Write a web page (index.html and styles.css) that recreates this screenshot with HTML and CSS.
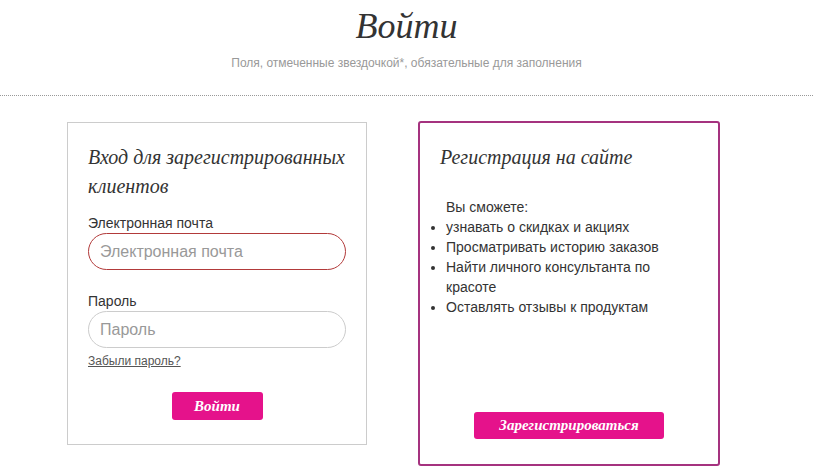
FILE: index.html
```html
<!DOCTYPE html>
<html lang="ru">
<head>
    <meta charset="UTF-8">
    <meta name="viewport" content="width=device-width, initial-scale=1.0">
    <title>Войти</title>
    <link rel="stylesheet" href="styles.css">
</head>
<body>
    <div class="page-head">
        <h1 class="page-title">Войти</h1>
        <p class="page-note">Поля, отмеченные звездочкой*, обязательные для заполнения</p>
    </div>
    <div class="cards">
        <form class="card login">
            <h2 class="card-title">Вход для зарегистрированных клиентов</h2>
            <label class="field-label" for="email">Электронная почта</label>
            <input class="field error" id="email" type="email" placeholder="Электронная почта">
            <label class="field-label second" for="pass">Пароль</label>
            <input class="field" id="pass" type="password" placeholder="Пароль">
            <a class="forgot" href="#">Забыли пароль?</a>
            <div class="btn-row">
                <button class="btn login-btn" type="button">Войти</button>
            </div>
        </form>
        <div class="card register">
            <h2 class="card-title">Регистрация на сайте</h2>
            <div class="benefits">
                <div class="benefits-intro">Вы сможете:</div>
                <ul class="benefits-list">
                    <li>узнавать о скидках и акциях</li>
                    <li>Просматривать историю заказов</li>
                    <li>Найти личного консультанта по красоте</li>
                    <li>Оставлять отзывы к продуктам</li>
                </ul>
            </div>
            <div class="btn-row">
                <button class="btn register-btn" type="button">Зарегистрироваться</button>
            </div>
        </div>
    </div>
</body>
</html>
```

FILE: styles.css
```css
body {
    margin: 0;
    background-color: #fff;
    color: #333;
    font-family: "Liberation Sans", Arial, sans-serif;
    font-size: 14px;
}
.page-head {
    text-align: center;
    padding-top: 4px;
    padding-bottom: 24px;
    border-bottom: 1px dotted #999;
}
.page-title {
    margin: 0;
    font-family: "Liberation Serif", "Times New Roman", serif;
    font-style: italic;
    font-weight: normal;
    font-size: 36px;
    line-height: 44px;
    color: #333;
}
.page-note {
    margin: 7px 0 0;
    font-size: 12px;
    line-height: 16px;
    color: #999;
}
.cards {
    display: flex;
    align-items: flex-start;
    gap: 51px;
    padding-left: 67px;
    margin-top: 25px;
}
.card {
    box-sizing: border-box;
    background: #fff;
}
.login {
    width: 300px;
    margin-top: 1px;
    border: 1px solid #ccc;
    padding: 20px 20px 24px;
    display: flex;
    flex-direction: column;
}
.register {
    width: 302px;
    border: 2px solid #a5327f;
    border-radius: 3px;
    padding: 20px 20px 25px;
}
.card-title {
    margin: 0;
    font-family: "Liberation Serif", "Times New Roman", serif;
    font-style: italic;
    font-weight: normal;
    font-size: 20px;
    line-height: 29px;
    color: #333;
}
.field-label {
    display: block;
    margin-top: 12px;
    line-height: 20px;
}
.field-label.second {
    margin-top: 21px;
}
.field {
    box-sizing: border-box;
    width: 258px;
    height: 37px;
    margin: 0;
    padding: 0 11px;
    border: 1px solid #ccc;
    border-radius: 19px;
    font-family: "Liberation Sans", Arial, sans-serif;
    font-size: 16px;
    color: #333;
    outline: none;
}
.field::placeholder {
    color: #999;
}
.field.error {
    border-color: #b23a3a;
}
.forgot {
    margin-top: 5px;
    font-size: 12px;
    line-height: 16px;
    color: #555;
    text-decoration: underline;
    align-self: flex-start;
}
.btn-row {
    display: flex;
    justify-content: center;
}
.login .btn-row {
    margin-top: 23px;
}
.btn {
    border: none;
    border-radius: 3px;
    background-color: #e5128b;
    color: #fff;
    font-family: "Liberation Serif", "Times New Roman", serif;
    font-style: italic;
    font-weight: bold;
    font-size: 15px;
    cursor: pointer;
}
.login-btn {
    width: 91px;
    height: 28px;
}
.register-btn {
    width: 190px;
    height: 27px;
}
.benefits {
    margin-top: 25px;
    padding-left: 6px;
    line-height: 20px;
}
.benefits-list {
    margin: 0;
    padding-left: 0;
    list-style: disc outside;
}
.register .btn-row {
    margin-top: 95px;
}
```
